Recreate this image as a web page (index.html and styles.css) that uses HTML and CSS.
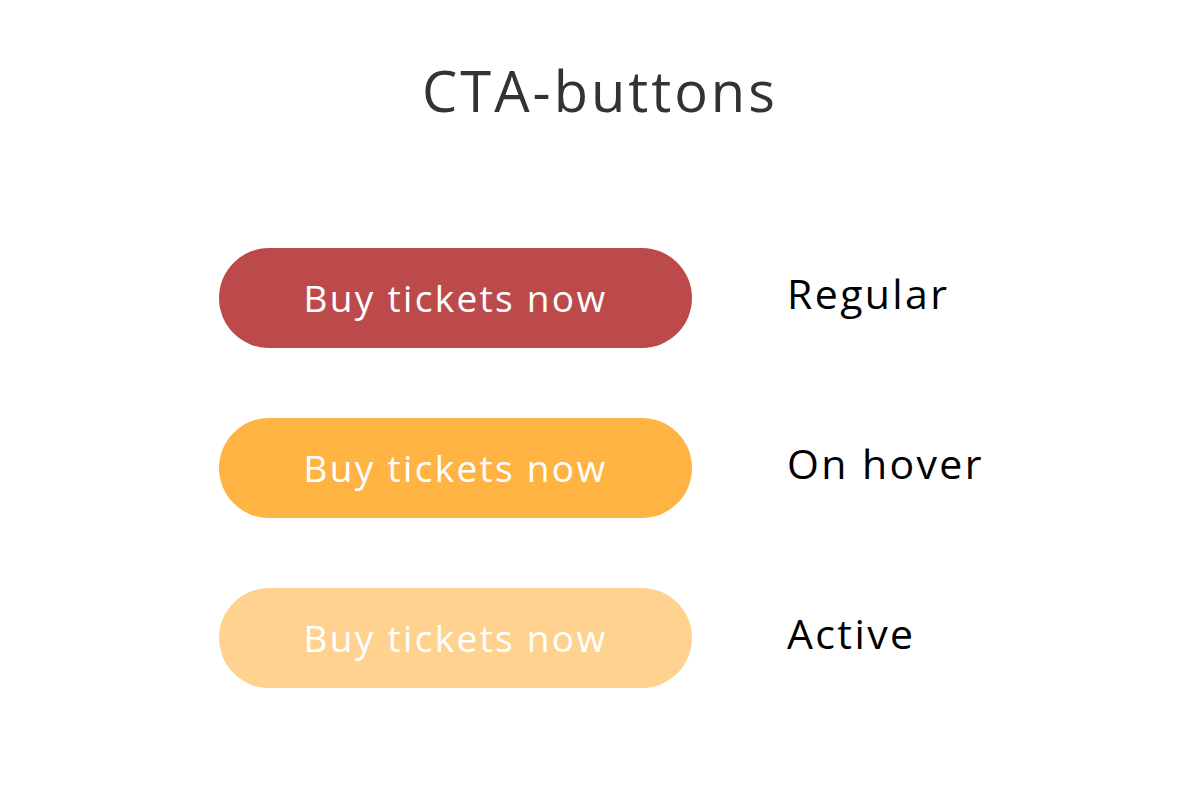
FILE: index.html
```html
<!DOCTYPE html>
<html>
<head>
<meta charset="utf-8">
<link rel="stylesheet" href="styles.css">
</head>
<body>
<main class="page">
  <h1 class="title">CTA-buttons</h1>
  <div class="states">
    <div class="btn btn-regular">Buy tickets now</div>
    <div class="label">Regular</div>
    <div class="btn btn-hover">Buy tickets now</div>
    <div class="label">On hover</div>
    <div class="btn btn-active">Buy tickets now</div>
    <div class="label">Active</div>
  </div>
</main>
</body>
</html>
```

FILE: styles.css
```css
html, body {
  margin: 0;
  padding: 0;
  background: #ffffff;
}
body {
  font-family: "Open Sans", "Noto Sans", sans-serif;
  width: 1200px;
  height: 800px;
  overflow: hidden;
}
.page {
  display: flex;
  flex-direction: column;
  align-items: center;
}
.title {
  margin: 58px 0 0 0;
  font-size: 56px;
  font-weight: 400;
  line-height: 64px;
  color: #333333;
  letter-spacing: 3px;
}
.states {
  align-self: flex-start;
  margin: 126px 0 0 219px;
  display: grid;
  grid-template-columns: 473px auto;
  grid-auto-rows: 100px;
  column-gap: 95px;
  row-gap: 70px;
  align-items: center;
}
.btn {
  height: 100px;
  border-radius: 50px;
  display: flex;
  align-items: center;
  justify-content: center;
  color: #ffffff;
  font-size: 37px;
  letter-spacing: 2.3px;
  padding-bottom: 2px;
  box-sizing: border-box;
}
.btn-regular { background: #bd4a4a; }
.btn-hover { background: #ffb343; }
.btn-active { background: #ffd290; }
.label {
  font-size: 41px;
  color: #000000;
  letter-spacing: 2.4px;
  margin-top: -10px;
}
```
